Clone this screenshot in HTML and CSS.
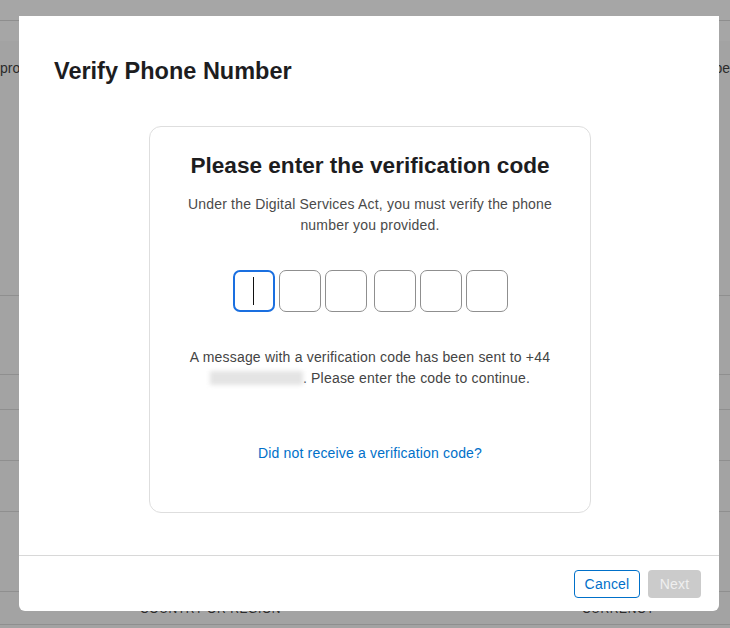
FILE: index.html
```html
<!DOCTYPE html>
<html lang="en">
<head>
<meta charset="utf-8">
<title>Verify Phone Number</title>
<link rel="stylesheet" href="styles.css">
</head>
<body>
<div class="page">
  <div class="topbar"></div>
  <div class="band"></div>
  <div class="row row-main"><span class="frag">pro</span><span class="frag">pe</span></div>
  <div class="row row-a"></div>
  <div class="row row-b"></div>
  <div class="row row-c"></div>
  <div class="row row-c"></div>
  <div class="row row-d"></div>
  <div class="row row-head"><span class="th">Country or Region</span><span class="th">Currency</span></div>
</div>

<div class="modal" role="dialog" aria-labelledby="modal-title">
  <div class="modal-body">
    <h1 class="modal-title" id="modal-title">Verify Phone Number</h1>
    <div class="card">
      <h2 class="card-title">Please enter the verification code</h2>
      <p class="desc">Under the Digital Services Act, you must verify the phone number you provided.</p>
      <div class="code">
        <div class="group">
          <div class="digit focused"><span class="caret"></span></div>
          <div class="digit"></div>
          <div class="digit"></div>
        </div>
        <div class="group">
          <div class="digit"></div>
          <div class="digit"></div>
          <div class="digit"></div>
        </div>
      </div>
      <p class="msg">A message with a verification code has been sent to +44 <span class="redacted"></span>. Please enter the code to continue.</p>
      <a class="link" href="#">Did not receive a verification code?</a>
    </div>
  </div>
  <div class="modal-footer">
    <button class="btn btn-cancel" type="button">Cancel</button>
    <button class="btn btn-next" type="button" disabled>Next</button>
  </div>
</div>
</body>
</html>
```

FILE: styles.css
```css
html, body {
  margin: 0;
  padding: 0;
}

body {
  width: 730px;
  height: 628px;
  overflow: hidden;
  background: #a3a3a3;
  font-family: "Liberation Sans", Arial, sans-serif;
  position: relative;
}

/* dimmed page behind the dialog */
.page {
  display: flex;
  flex-direction: column;
}

.topbar {
  height: 20px;
  background: #a6a6a6;
  border-bottom: 1px solid #8e8e8e;
}

.band {
  height: 20px;
  background: #a6a6a6;
}

.row {
  border-bottom: 1px solid #8f8f8f;
  display: flex;
  justify-content: space-between;
}

.row-main {
  height: 255px;
  box-sizing: border-box;
  padding-top: 18px;
}

.frag {
  font-size: 14px;
  line-height: 18px;
  color: #2b2b2b;
  height: 18px;
}

.row-a { height: 78px; }
.row-b { height: 34px; }
.row-c { height: 50px; }
.row-d { height: 79px; }

.row-head {
  height: 33px;
  box-sizing: border-box;
  padding: 10px 0 0 140px;
  display: grid;
  grid-template-columns: 442px 1fr;
}

.th {
  font-size: 12px;
  line-height: 14px;
  text-transform: uppercase;
  letter-spacing: 0.6px;
  color: #2b2b2b;
}

/* dialog */
.modal {
  position: absolute;
  top: 16px;
  left: 19px;
  width: 700px;
  height: 595px;
  background: #fff;
  border-radius: 0 0 6px 6px;
  display: flex;
  flex-direction: column;
}

.modal-body {
  flex: 1;
  padding: 41px 35px 0;
}

.modal-title {
  margin: 0;
  font-size: 23.5px;
  line-height: 28px;
  font-weight: 700;
  color: #1d1d1f;
}

.card {
  margin: 41px 0 0 95px;
  width: 442px;
  height: 387px;
  box-sizing: border-box;
  border: 1px solid #dedede;
  border-radius: 12px;
  padding: 25px 28px 0;
  text-align: center;
}

.card-title {
  margin: 0;
  font-size: 22.6px;
  line-height: 28px;
  font-weight: 700;
  color: #1d1d1f;
}

.desc {
  margin: 14px 0 0;
  font-size: 14px;
  line-height: 21px;
  letter-spacing: 0.19px;
  color: #4a4a4a;
}

.code {
  display: flex;
  justify-content: center;
  gap: 7px;
  margin-top: 34px;
}

.group {
  display: flex;
  gap: 4px;
}

.digit {
  width: 42px;
  height: 42px;
  box-sizing: border-box;
  border: 1px solid #8f8f8f;
  border-radius: 7px;
  display: flex;
  align-items: center;
  justify-content: center;
}

.digit.focused {
  border: 2px solid #1a6fe0;
}

.caret {
  width: 1px;
  height: 28px;
  background: #111;
}

.msg {
  margin: 35px 0 0;
  font-size: 14px;
  line-height: 21px;
  letter-spacing: 0.19px;
  color: #444;
}

.redacted {
  display: inline-block;
  width: 93px;
  height: 14px;
  vertical-align: -2px;
  background: #e4e4e4;
  filter: blur(2px);
}

.link {
  display: block;
  margin-top: 54px;
  font-size: 14px;
  line-height: 21px;
  letter-spacing: 0.17px;
  color: #0070c9;
  text-decoration: none;
}

.modal-footer {
  height: 56px;
  box-sizing: border-box;
  border-top: 1px solid #d8d8d8;
  padding: 14px 18px 0;
  display: flex;
  justify-content: flex-end;
  align-items: flex-start;
  gap: 8px;
}

.btn {
  height: 28px;
  box-sizing: border-box;
  border-radius: 4px;
  font-family: "Liberation Sans", Arial, sans-serif;
  font-size: 14px;
  letter-spacing: 0.2px;
  padding: 0;
}

.btn-cancel {
  width: 66px;
  border: 1px solid #0070c9;
  background: #fff;
  color: #0070c9;
}

.btn-next {
  width: 53px;
  border: none;
  background: #cbcbcb;
  color: #efefef;
}
```
